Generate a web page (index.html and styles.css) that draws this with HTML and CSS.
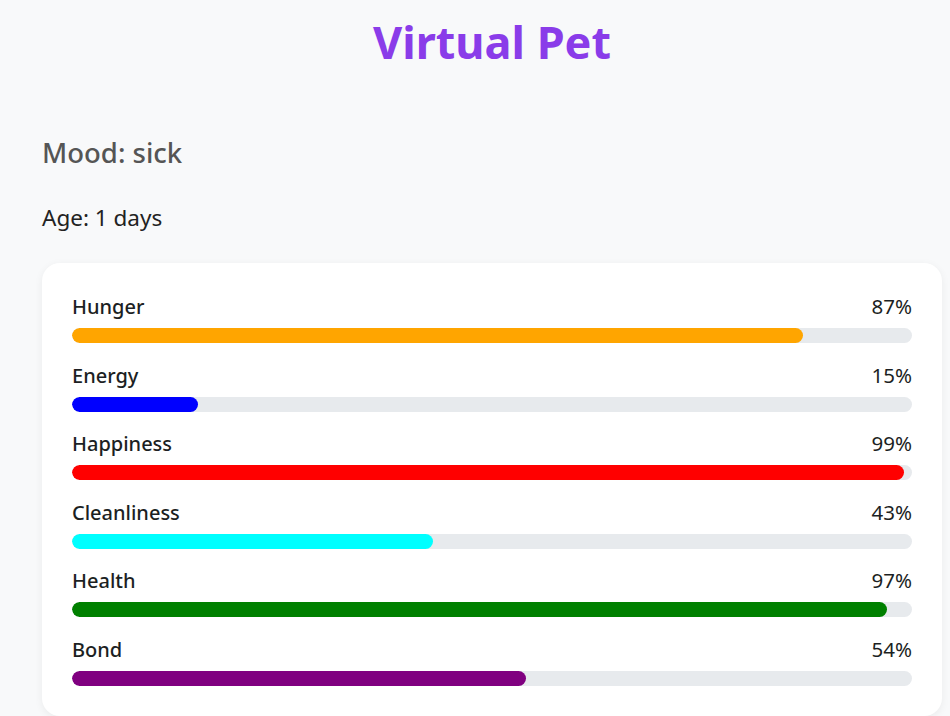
FILE: index.html
```html
<!DOCTYPE html>
<html lang="en">
<head>
<meta charset="utf-8">
<title>Virtual Pet</title>
<link rel="stylesheet" href="styles.css">
</head>
<body>
<div class="app">
  <h1 class="title">Virtual Pet</h1>
  <h2 class="mood">Mood: sick</h2>
  <p class="age">Age: 1 days</p>
  <div class="card">
    <div class="stat">
      <div class="stat-head"><span>Hunger</span><span class="pct">87%</span></div>
      <div class="track"><div class="fill fill-hunger" style="width:87%"></div></div>
    </div>
    <div class="stat">
      <div class="stat-head"><span>Energy</span><span class="pct">15%</span></div>
      <div class="track"><div class="fill fill-energy" style="width:15%"></div></div>
    </div>
    <div class="stat">
      <div class="stat-head"><span>Happiness</span><span class="pct">99%</span></div>
      <div class="track"><div class="fill fill-happiness" style="width:99%"></div></div>
    </div>
    <div class="stat">
      <div class="stat-head"><span>Cleanliness</span><span class="pct">43%</span></div>
      <div class="track"><div class="fill fill-clean" style="width:43%"></div></div>
    </div>
    <div class="stat">
      <div class="stat-head"><span>Health</span><span class="pct">97%</span></div>
      <div class="track"><div class="fill fill-health" style="width:97%"></div></div>
    </div>
    <div class="stat">
      <div class="stat-head"><span>Bond</span><span class="pct">54%</span></div>
      <div class="track"><div class="fill fill-bond" style="width:54%"></div></div>
    </div>
  </div>
</div>
</body>
</html>
```

FILE: styles.css
```css
html, body {
  margin: 0;
  padding: 0;
  background: #f8f9fa;
  font-family: "Noto Sans", "Open Sans", sans-serif;
  color: #1f2328;
}
.app {
  width: 900px;
  margin-left: 42px;
}
.title {
  margin: 0;
  padding-top: 12px;
  text-align: center;
  font-size: 45px;
  line-height: 60px;
  font-weight: 700;
  color: #8a3ce9;
}
.mood {
  margin: 63px 0 0;
  font-size: 27.5px;
  line-height: 36px;
  font-weight: 500;
  color: #555555;
}
.age {
  margin: 32px 0 0;
  font-size: 22.5px;
  line-height: 30px;
  color: #222222;
}
.card {
  margin-top: 30px;
  background: #ffffff;
  border-radius: 18px;
  padding: 30px;
  box-shadow: 0 2px 8px rgba(0, 0, 0, 0.06);
  display: flex;
  flex-direction: column;
  gap: 18.5px;
}
.stat-head {
  display: flex;
  justify-content: space-between;
  font-size: 20px;
  line-height: 27px;
  font-weight: 500;
  color: #1c1f23;
  margin-bottom: 8px;
}
.pct {
  font-weight: 400;
  font-size: 20.5px;
}
.track {
  height: 15px;
  border-radius: 8px;
  background: #e7eaed;
  overflow: hidden;
}
.fill {
  height: 100%;
  border-radius: 8px;
}
.fill-hunger { background: #ffa500; }
.fill-energy { background: #0000ff; }
.fill-happiness { background: #ff0000; }
.fill-clean { background: #00ffff; }
.fill-health { background: #008000; }
.fill-bond { background: #800080; }
```
